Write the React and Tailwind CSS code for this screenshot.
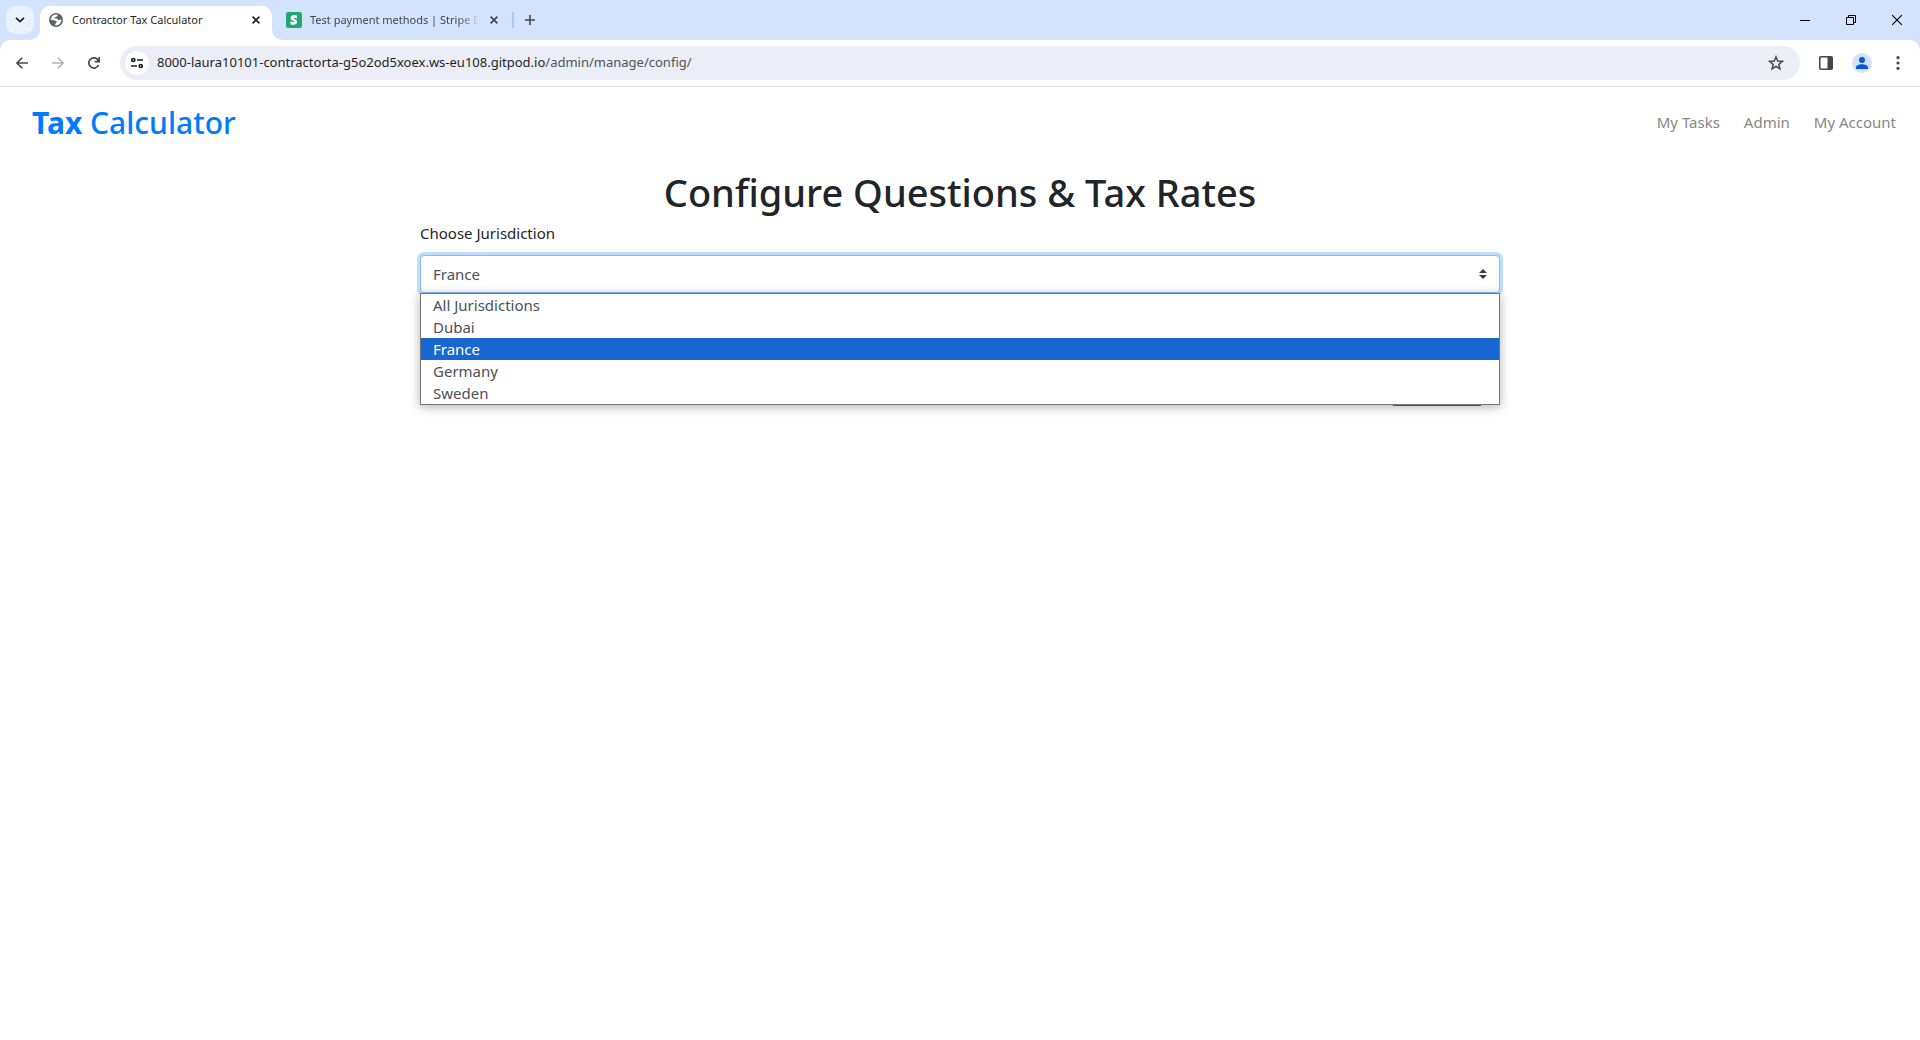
import React, { useState } from "react";

const jurisdictions = ["All Jurisdictions", "Dubai", "France", "Germany", "Sweden"];

function GlobeIcon() {
  return (
    <svg width="14" height="14" viewBox="0 0 14 14" className="shrink-0" aria-hidden="true">
      <circle cx="7" cy="7" r="7" fill="#5f6368" />
      <path d="M8.6 1.7C7.6 1.4 6.4 1.4 5.4 1.8 3.2 2.6 1.7 4.6 1.6 6.8L5 7.2C6.2 7.4 6.4 8.4 7.6 8.5V9.8C6.8 10.2 6.2 10.8 6.2 12.4 8.6 12.7 11.2 11.2 12.1 8.8 12.4 8 12.5 7.2 12.4 6.6 11.6 6.2 10.8 7.4 9.6 7 8.8 6.6 8.8 5.6 8 5.4H5.6C5.4 4.6 5.8 4 6.6 3.9 7.8 3.8 8.6 3 8.6 1.7Z" fill="#fff" />
    </svg>
  );
}

function CloseIcon() {
  return (
    <svg width="8" height="8" viewBox="0 0 8 8" fill="none" stroke="currentColor" strokeWidth="1.6" aria-hidden="true">
      <path d="M.6.6 7.4 7.4M7.4.6.6 7.4" />
    </svg>
  );
}

function TabStrip() {
  return (
    <div className="flex h-10 items-start bg-[#d3e3fd]">
      <button aria-label="Search tabs" className="mt-[6px] ml-[6px] flex size-7 items-center justify-center rounded-[10px] bg-[#eaf1fd]">
        <svg width="10" height="6" viewBox="0 0 10 6" fill="none" stroke="#1f1f1f" strokeWidth="1.8" aria-hidden="true">
          <path d="M1 .8 5 4.6 9 .8" />
        </svg>
      </button>
      <div className="relative mt-[6px] ml-[6px] flex h-[34px] w-[232px] items-center rounded-t-[10px] bg-white pr-3 pb-[6px] pl-[9px] text-[#1f1f1f]">
        <svg width="10" height="10" viewBox="0 0 10 10" className="absolute bottom-0 -left-[10px]" aria-hidden="true">
          <path d="M10 0V10H0A10 10 0 0 0 10 0Z" fill="#fff" />
        </svg>
        <svg width="10" height="10" viewBox="0 0 10 10" className="absolute -right-[10px] bottom-0" aria-hidden="true">
          <path d="M0 0V10H10A10 10 0 0 1 0 0Z" fill="#fff" />
        </svg>
        <GlobeIcon />
        <span className="ml-[9px] flex-1 text-[11px] whitespace-nowrap">Contractor Tax Calculator</span>
        <button aria-label="Close Contractor Tax Calculator"><CloseIcon /></button>
      </div>
      <div className="mt-[6px] ml-[14px] flex h-7 items-center text-[#44474a]">
        <svg width="16" height="16" viewBox="0 0 16 16" className="shrink-0" aria-hidden="true">
          <rect width="16" height="16" rx="2" fill="#24a670" />
          <path d="M11 3.6C10.1 3.1 9.2 2.9 8.3 2.9 6.1 2.9 4.6 4 4.6 5.9c0 2.9 3.7 2.4 3.7 3.6 0 .4-.4.6-1 .6-.9 0-2-.4-2.8-.8v2.9c.9.4 1.9.6 2.9.6 2.2 0 3.8-1 3.8-3 0-3-3.8-2.5-3.8-3.6 0-.3.3-.5.9-.5.8 0 1.9.3 2.7.7Z" fill="#fff" />
        </svg>
        <span className="ml-2 w-[168px] text-[11px] whitespace-nowrap [mask-image:linear-gradient(to_right,#000_148px,transparent_170px)]">
          Test payment methods | Stripe D
        </span>
        <button aria-label="Close Test payment methods" className="ml-[12px]"><CloseIcon /></button>
        <span className="ml-[14px] h-4 w-[2px] bg-[#a8c7fa]" />
        <button aria-label="New tab" className="ml-[11px]">
          <svg width="10" height="10" viewBox="0 0 10 10" fill="none" stroke="#44474a" strokeWidth="1.6" aria-hidden="true">
            <path d="M5 0V10M0 5H10" />
          </svg>
        </button>
      </div>
      <div className="ml-auto flex h-10 items-center gap-9 pr-[18px]">
        <button aria-label="Minimize">
          <svg width="10" height="10" viewBox="0 0 10 10" stroke="#000" aria-hidden="true"><path d="M0 5.5H10" /></svg>
        </button>
        <button aria-label="Restore">
          <svg width="10" height="10" viewBox="0 0 10 10" fill="none" stroke="#000" aria-hidden="true">
            <path d="M.5 2.5H7.5V9.5H.5ZM2.5 2.5V.5H9.5V7.5H7.5" />
          </svg>
        </button>
        <button aria-label="Close window">
          <svg width="10" height="10" viewBox="0 0 10 10" fill="none" stroke="#000" strokeWidth="1.1" aria-hidden="true">
            <path d="M0 0 10 10M10 0 0 10" />
          </svg>
        </button>
      </div>
    </div>
  );
}

function Toolbar() {
  return (
    <div className="bg-[#d3e3fd]">
      <div className="flex h-[47px] items-center rounded-t-[10px] border-b border-[#dfe1e3] bg-white pr-5 pl-4">
        <button aria-label="Back">
          <svg width="12" height="12" viewBox="0 0 12 12" fill="none" stroke="#474747" strokeWidth="1.6" aria-hidden="true">
            <path d="M12 6H1.2M6.2.7.9 6l5.3 5.3" />
          </svg>
        </button>
        <button aria-label="Forward" className="ml-6">
          <svg width="12" height="12" viewBox="0 0 12 12" fill="none" stroke="#b0b1b3" strokeWidth="1.5" aria-hidden="true">
            <path d="M0 6H10.8M5.8.7 11.1 6 5.8 11.3" />
          </svg>
        </button>
        <button aria-label="Reload" className="ml-6">
          <svg width="12" height="12" viewBox="0 0 12 12" fill="none" stroke="#474747" strokeWidth="1.7" aria-hidden="true">
            <path d="M10.6 8A5.1 5.1 0 1 1 10.2 3.2L11 4.4M11.2 0V4.7H6.6" />
          </svg>
        </button>
        <div className="ml-5 flex h-[34px] flex-1 items-center rounded-full bg-[#ebeef7] pr-4 pl-[5px]">
          <button aria-label="Site information" className="flex size-6 items-center justify-center rounded-full bg-white">
            <svg width="12" height="12" viewBox="0 0 12 12" fill="none" stroke="#1f1f1f" strokeWidth="1.7" aria-hidden="true">
              <circle cx="2.3" cy="3" r="1.5" />
              <path d="M6 3H12M0 9H6" />
              <circle cx="9.7" cy="9" r="1.5" />
            </svg>
          </button>
          <div className="ml-2 flex-1 text-[13px] whitespace-nowrap text-[#1f1f1f]">
            8000-laura10101-contractorta-g5o2od5xoex.ws-eu108.gitpod.io<span className="text-[#505357]">/admin/manage/config/</span>
          </div>
          <button aria-label="Bookmark this tab">
            <svg width="16" height="16" viewBox="0 0 16 16" fill="none" stroke="#474747" strokeWidth="1.5" aria-hidden="true">
              <path d="m8 1.8 1.7 4.3 4.6.3-3.5 3 1.1 4.5L8 11.4l-3.9 2.5 1.1-4.5-3.5-3 4.6-.3Z" />
            </svg>
          </button>
        </div>
        <button aria-label="Side panel" className="ml-[19px]">
          <svg width="14" height="14" viewBox="0 0 14 14" aria-hidden="true">
            <rect x=".8" y=".8" width="12.4" height="12.4" rx="1" fill="none" stroke="#474747" strokeWidth="1.6" />
            <path d="M8.5 1H13V13H8.5Z" fill="#474747" />
          </svg>
        </button>
        <button aria-label="Profile" className="ml-[19px] flex size-5 items-center justify-center rounded-full bg-[#d3e3fd]">
          <svg width="12" height="12" viewBox="0 0 12 12" fill="#0b57d0" aria-hidden="true">
            <circle cx="6" cy="3" r="3" />
            <path d="M0 12V10.2C0 8.2 3.4 7.2 6 7.2s6 1 6 3V12Z" />
          </svg>
        </button>
        <button aria-label="Menu" className="ml-6">
          <svg width="4" height="14" viewBox="0 0 4 14" fill="#474747" aria-hidden="true">
            <circle cx="2" cy="1.7" r="1.6" /><circle cx="2" cy="7" r="1.6" /><circle cx="2" cy="12.3" r="1.6" />
          </svg>
        </button>
      </div>
    </div>
  );
}

export default function App() {
  const [value, setValue] = useState("France");
  return (
    <div className="min-h-screen bg-white font-['Noto_Sans','Open_Sans',sans-serif] text-[#212529]">
      <TabStrip />
      <Toolbar />
      <nav className="flex h-[70px] items-center justify-between pr-6 pl-8">
        <a href="#home" className="pt-[2px] text-[30px] leading-9 font-medium text-[#007bff]"><b className="font-bold">Tax</b> Calculator</a>
        <div className="flex gap-6 text-[15px] leading-6 text-[#868686]">
          <a href="#tasks">My Tasks</a>
          <a href="#admin">Admin</a>
          <a href="#account">My Account</a>
        </div>
      </nav>
      <main className="mx-auto max-w-[1080px] pt-2">
        <h1 className="text-center text-[38px] leading-[54px] font-medium">Configure Questions &amp; Tax Rates</h1>
        <label htmlFor="jurisdiction" className="mt-[2px] block text-[15px] leading-6">Choose Jurisdiction</label>
        <div className="relative mt-[10px]">
          <select
            id="jurisdiction"
            value={value}
            onChange={(e) => setValue(e.target.value)}
            className="block h-[38px] w-full appearance-none rounded-[4px] border border-[#80bdff] bg-white px-3 text-[15px] text-[#495057] ring-3 ring-[#bfdeff] outline-none"
          >
            {jurisdictions.map((j) => <option key={j}>{j}</option>)}
          </select>
          <svg width="8" height="10" viewBox="0 0 8 10" fill="#343a40" className="pointer-events-none absolute top-[14px] right-[13px]" aria-hidden="true">
            <path d="M4 0 8 4H0ZM0 6H8L4 10Z" />
          </svg>
          <ul role="listbox" aria-label="Jurisdictions" className="absolute top-full left-0 z-10 w-full border border-[#767676] bg-white text-[15px] leading-[22px] text-[#495057] shadow-[0_2px_10px_rgba(0,0,0,0.3)]">
            {jurisdictions.map((j) => (
              <li key={j} role="option" aria-selected={j === value}>
                <button
                  onClick={() => setValue(j)}
                  className={j === value ? "block h-[22px] w-full bg-[#1967d2] px-3 text-left text-white" : "block h-[22px] w-full px-3 text-left"}
                >
                  {j}
                </button>
              </li>
            ))}
          </ul>
        </div>
        <div className="flex justify-end pt-[75px] pr-[17px]">
          <button className="h-[38px] w-[92px] rounded-[4px] bg-[#007bff]" aria-label="Configure" />
        </div>
      </main>
    </div>
  );
}
